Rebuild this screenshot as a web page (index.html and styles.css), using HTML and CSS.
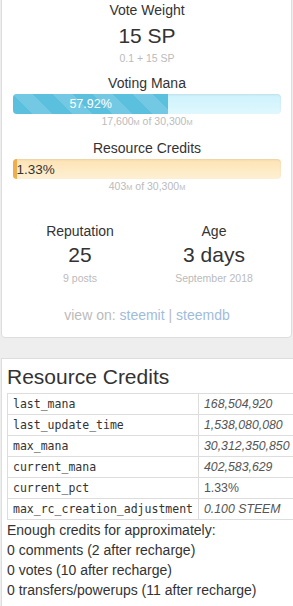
FILE: index.html
```html
<!DOCTYPE html>
<html lang="en">

<head>
  <meta charset="UTF-8" />
  <meta name="viewport" content="width=device-width, initial-scale=1.0" />
  <title>Account | steemd</title>
  <link rel="stylesheet" href="styles.css">
</head>

<body>
  <!-- Account summary -->
  <div class="panel summary">
    <div class="stat-label">Vote Weight</div>
    <div class="stat-value">15 SP</div>
    <div class="stat-sub">0.1 + 15 SP</div>

    <div class="stat-label mana-label">Voting Mana</div>
    <div class="bar bar-vp">
      <div class="bar-fill" style="width: 57.92%;">57.92%</div>
    </div>
    <div class="stat-sub">17,600<small>M</small> of 30,300<small>M</small></div>

    <div class="stat-label mana-label">Resource Credits</div>
    <div class="bar bar-rc">
      <div class="bar-fill" style="width: 1.33%;"></div>
      <span class="bar-text">1.33%</span>
    </div>
    <div class="stat-sub">403<small>M</small> of 30,300<small>M</small></div>

    <div class="stat-cols">
      <div class="stat-col">
        <div class="stat-label">Reputation</div>
        <div class="stat-value">25</div>
        <div class="stat-sub">9 posts</div>
      </div>
      <div class="stat-col">
        <div class="stat-label">Age</div>
        <div class="stat-value">3 days</div>
        <div class="stat-sub">September 2018</div>
      </div>
    </div>

    <div class="view-on">
      view on: <a href="#">steemit</a> | <a href="#">steemdb</a>
    </div>
  </div>

  <!-- Resource credits details -->
  <div class="panel rc-panel">
    <h3>Resource Credits</h3>
    <table class="rc-table">
      <tbody>
        <tr>
          <td class="key">last_mana</td>
          <td class="val">168,504,920</td>
        </tr>
        <tr>
          <td class="key">last_update_time</td>
          <td class="val">1,538,080,080</td>
        </tr>
        <tr>
          <td class="key">max_mana</td>
          <td class="val">30,312,350,850</td>
        </tr>
        <tr>
          <td class="key">current_mana</td>
          <td class="val">402,583,629</td>
        </tr>
        <tr>
          <td class="key">current_pct</td>
          <td class="val plain">1.33%</td>
        </tr>
        <tr>
          <td class="key">max_rc_creation_adjustment</td>
          <td class="val">0.100 STEEM</td>
        </tr>
      </tbody>
    </table>
    <div class="rc-estimate">
      Enough credits for approximately:<br>
      0 comments (2 after recharge)<br>
      0 votes (10 after recharge)<br>
      0 transfers/powerups (11 after recharge)
    </div>
  </div>
</body>

</html>
```

FILE: styles.css
```css
body {
  margin: 0;
  padding: 0;
  font-family: "Liberation Sans", Arial, sans-serif;
  color: #333;
  background-color: #eeeeee;
  overflow-x: hidden;
}

.panel {
  background-color: #fff;
  border: 1px solid #ddd;
  border-radius: 4px;
}

.summary {
  margin: -6px 1px 0 1px;
  padding: 5px 10px 12px 11px;
  text-align: center;
}

.stat-label {
  font-size: 14px;
  line-height: 20px;
}

.stat-value {
  font-size: 21px;
  line-height: 26px;
  margin-top: 3px;
}

.stat-sub {
  font-size: 10.5px;
  line-height: 14px;
  color: #bbb;
  margin-top: 2px;
}

.stat-sub small {
  font-size: 70%;
}

.mana-label {
  margin-top: 8px;
}

.bar {
  display: flex;
  height: 20px;
  margin-top: 1px;
  border-radius: 4px;
  overflow: hidden;
  box-shadow: inset 0 1px 2px rgba(0, 0, 0, 0.08);
}

.bar + .stat-sub {
  margin-top: 0;
}

.bar-vp {
  background-image: linear-gradient(#cdf2fc, #e0f8fe);
}

.bar-vp .bar-fill {
  display: flex;
  justify-content: center;
  align-items: center;
  color: #fff;
  font-size: 12.5px;
  background-color: #5bc0de;
  background-image: linear-gradient(45deg, rgba(255, 255, 255, .15) 25%, transparent 25%, transparent 50%, rgba(255, 255, 255, .15) 50%, rgba(255, 255, 255, .15) 75%, transparent 75%, transparent);
  background-size: 40px 40px;
}

.bar-rc {
  align-items: center;
  background-image: linear-gradient(#fde3b3, #fef0d4);
}

.bar-rc .bar-fill {
  align-self: stretch;
  background-color: #f0ad4e;
}

.bar-text {
  font-size: 13.5px;
  color: #333;
}

.stat-cols {
  display: flex;
  margin-top: 26px;
}

.stat-col {
  flex: 1;
}

.stat-col .stat-value {
  margin-top: 1px;
}

.stat-col .stat-sub {
  margin-top: 3px;
}

.view-on {
  margin-top: 20px;
  font-size: 14px;
  line-height: 20px;
  color: #bbb;
}

.view-on a {
  color: #9fbcdb;
  text-decoration: none;
}

.rc-panel {
  margin: 20px 0 0 1px;
  padding: 6px 0 0 5px;
  border-radius: 0;
  border-right: none;
  border-bottom: none;
}

.rc-panel h3 {
  margin: 0 0 5px;
  font-size: 21px;
  line-height: 23px;
  font-weight: normal;
}

.rc-table {
  border-collapse: collapse;
}

.rc-table td {
  border: 1px solid #ddd;
  padding: 2px 5px;
  line-height: 16px;
  white-space: nowrap;
}

.rc-table .key {
  font-family: "DejaVu Sans Mono", monospace;
  font-size: 11.5px;
}

.rc-table .val {
  font-size: 12.3px;
  font-style: italic;
  color: #555;
}

.rc-table .plain {
  font-style: normal;
}

.rc-estimate {
  font-size: 14px;
  line-height: 20px;
  padding-bottom: 10px;
}
```
